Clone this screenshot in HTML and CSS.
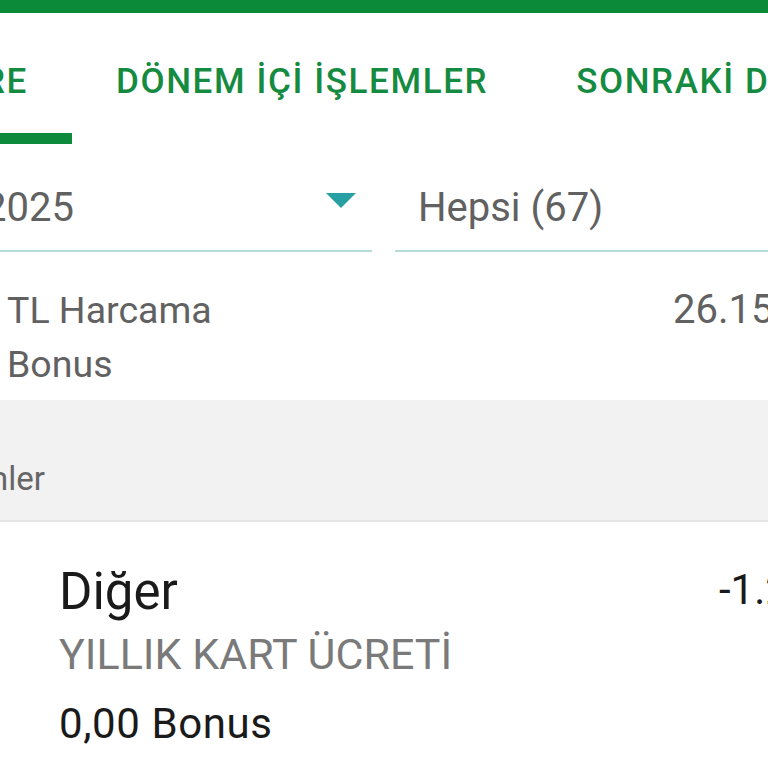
FILE: index.html
```html
<!DOCTYPE html>
<html lang="tr">

<head>
  <meta charset="UTF-8">
  <meta name="viewport" content="width=device-width, initial-scale=1.0">
  <title>Kart Hareketleri</title>
  <link rel="stylesheet" href="styles.css">
</head>

<body>
  <div class="topbar"></div>

  <!-- sekmeler -->
  <nav class="tabs">
    <div class="tab tab-first active">EKSTRE</div>
    <div class="tab">DÖNEM İÇİ İŞLEMLER</div>
    <div class="tab">SONRAKİ DÖNEM</div>
  </nav>

  <!-- filtreler -->
  <div class="filters">
    <div class="field field-left">
      <span class="value">Ocak 2025</span>
      <svg class="caret" width="30" height="15" viewBox="0 0 30 15">
        <polygon points="0,0 30,0 15,15" fill="#26a0a3" />
      </svg>
    </div>
    <div class="field field-right">
      <span class="value">Hepsi (67)</span>
    </div>
  </div>

  <div class="summary">
    <div class="summary-left">
      <div>TL Harcama</div>
      <div>Bonus</div>
    </div>
    <div class="summary-right">26.154,20 TL</div>
  </div>

  <div class="section-head">
    <span class="section-title">İşlemler</span>
  </div>

  <ul class="tx-list">
    <li class="tx">
      <div class="tx-main">
        <div class="tx-name">Diğer</div>
        <div class="tx-desc">YILLIK KART ÜCRETİ</div>
        <div class="tx-bonus">0,00 Bonus</div>
      </div>
      <div class="tx-amount">-1.250,00 TL</div>
    </li>
  </ul>
</body>

</html>
```

FILE: styles.css
```css
body {
  margin: 0;
  width: 768px;
  height: 768px;
  overflow: hidden;
  background: #fff;
  font-family: Roboto, "Noto Sans", sans-serif;
}

.topbar {
  height: 13px;
  background-color: #0b8a3a;
}

.tabs {
  display: flex;
  white-space: nowrap;
}

.tab {
  flex: none;
  box-sizing: border-box;
  display: flex;
  justify-content: center;
  padding: 51px 44px 34px;
  font-size: 35px;
  line-height: 35px;
  font-weight: 500;
  letter-spacing: 1.6px;
  color: #158b41;
  border-bottom: 11px solid transparent;
}

.tab-first {
  width: 200px;
  margin-left: -128px;
  justify-content: flex-end;
}

.tab.active {
  border-bottom-color: #0e8a3c;
}

.filters {
  display: flex;
  gap: 23px;
  white-space: nowrap;
}

.field {
  display: flex;
  align-items: flex-start;
  box-sizing: border-box;
  padding: 44px 0 22px;
  border-bottom: 2px solid #b5ddd9;
  font-size: 40px;
  line-height: 40px;
  color: #616161;
}

.field-left {
  flex: 0 0 500px;
  margin-left: -128px;
}

.field-left .value {
  flex: 0 0 202px;
  text-align: right;
}

.field-left .caret {
  margin: 5px 16px 0 auto;
}

.field-right {
  flex: 0 0 400px;
  padding-left: 23px;
}

.summary {
  display: flex;
  padding: 31px 0 9px 7px;
  font-size: 37.5px;
  line-height: 54px;
  color: #616161;
  white-space: nowrap;
}

.summary-left {
  flex: 0 0 666px;
}

.summary-right {
  font-size: 40px;
}

.section-head {
  display: flex;
  height: 122px;
  box-sizing: border-box;
  padding-top: 62px;
  background-color: #f2f2f2;
  border-bottom: 2px solid #e6e6e6;
}

.section-title {
  flex: 0 0 200px;
  margin-left: -155px;
  text-align: right;
  font-size: 33px;
  line-height: 33px;
  color: #666;
}

.tx-list {
  list-style: none;
  margin: 0;
  padding: 0;
}

.tx {
  display: flex;
  padding: 44px 0 0 59px;
  white-space: nowrap;
}

.tx-main {
  flex: 0 0 660px;
}

.tx-name {
  font-size: 51px;
  line-height: 51px;
  color: #1a1a1a;
}

.tx-desc {
  margin-top: 16px;
  font-size: 43px;
  line-height: 43px;
  color: #7a7a7a;
}

.tx-bonus {
  margin-top: 27px;
  font-size: 42px;
  line-height: 42px;
  letter-spacing: 0.6px;
  color: #1a1a1a;
}

.tx-amount {
  margin-top: 3px;
  font-size: 42px;
  line-height: 42px;
  color: #1a1a1a;
}
```
